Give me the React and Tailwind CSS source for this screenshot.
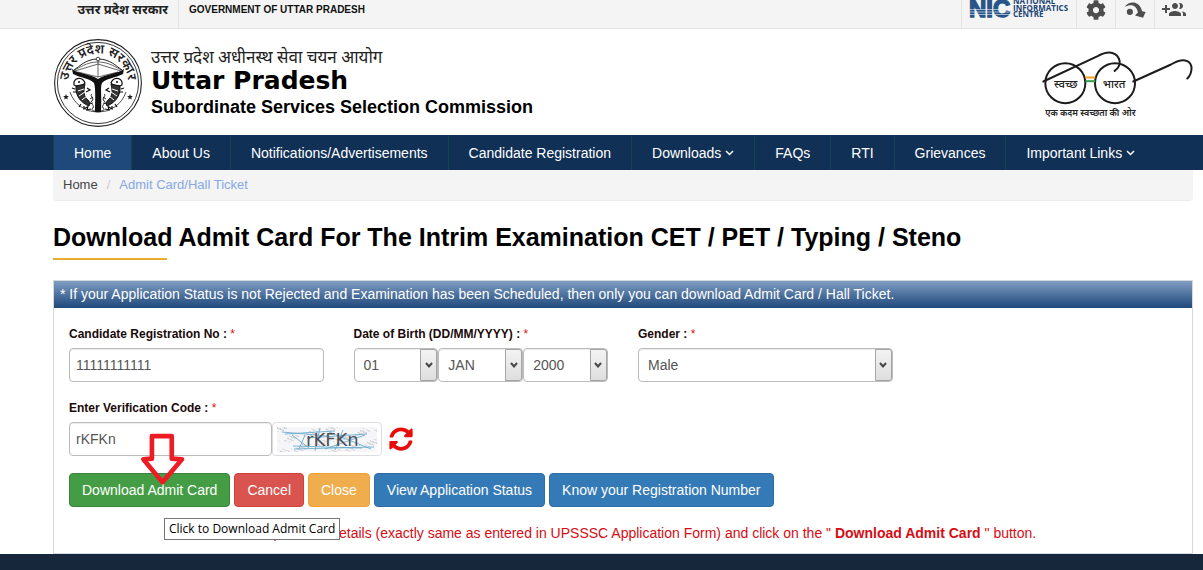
import React from "react";
import { FaSyncAlt, FaCog } from "react-icons/fa";

const hindi = "font-['Noto_Sans','Noto_Sans_Devanagari',sans-serif]";

function Emblem() {
  const fish = (
    <g fill="none" stroke="#111">
      <path d="M-24 -1 C-22 -6 -15 -6 -13 0 C-15 3 -21 4 -24 2 Z" fill="#fff" strokeWidth="1.2" />
      <circle cx="-19" cy="-1" r="1" fill="#111" stroke="none" />
      <path d="M-22 3 C-23 14 -16 20 -9 23 C-8 20 -8 19 -10 17 C-14 14 -15 9 -13 1 Z" fill="#333" strokeWidth="1" />
      <path d="M-20 8 l6 -2 M-19 13 l6 -4 M-16 17 l5 -4" stroke="#fff" strokeWidth="1" />
      <path d="M-26 5 l3 1 M-25 9 l3 0 M-11 5 l3 2 -4 2 M-17 21 l-2 3 M-14 23 l0 3 3 -2 M-10 23 l-1 4 4 -1" strokeWidth="1.2" />
      <path d="M-6 11 C-9 13 -3 15 -6 18 C-10 20 -3 21 -5 25 C-8 27 -4 28 -3 28 M-8 16 l3 -2 M-9 21 l4 -1" strokeWidth="0.9" />
    </g>
  );
  return (
    <svg viewBox="-44 -44 88 88" className="size-[88px] shrink-0" role="img" aria-label="Emblem">
      <g fill="none" stroke="#222">
        <circle r="43.4" strokeWidth="1.1" />
        <circle r="40.6" strokeWidth="0.9" />
        <path d="M-28 9 A29.5 29.5 0 0 0 28 9" strokeWidth="0.8" />
        <path d="M-24 -13 C-18 -17 -12 -24 0 -24 C12 -24 18 -17 24 -13" strokeWidth="1" />
        <path d="M-24 -13 C-18 -15 -12 -21 0 -21 C12 -21 18 -15 24 -13" strokeWidth="0.7" />
        <path d="M0 -26 V-6 M-23 -12 L0 -19 L23 -12 M-20 -11 L0 -6 L20 -11" strokeWidth="0.7" />
      </g>
      <circle cy="-24" r="1.8" fill="#fff" stroke="#222" strokeWidth="0.8" />
      <path d="M-26 -14 C-19 -9 -8 -9 0 -4 C8 -9 19 -9 26 -14 L25 -9 C17 -5 9 -5 4 0 C2 4 4 13 3 29 H-3 C-3 20 -2 6 -4 0 C-9 -5 -17 -5 -25 -9 Z" fill="#111" />
      {fish}
      <g transform="scale(-1 1)">{fish}</g>
      <g fill="#222">
        <path d="M-32 11 l.8 2 2.1 .1 -1.6 1.4 .5 2.1 -1.8 -1.1 -1.8 1.1 .5 -2.1 -1.6 -1.4 2.1 -.1 Z" />
        <path d="M32 11 l.8 2 2.1 .1 -1.6 1.4 .5 2.1 -1.8 -1.1 -1.8 1.1 .5 -2.1 -1.6 -1.4 2.1 -.1 Z" />
      </g>
      <path id="arc" d="M-26.7 14 A30 30 0 1 1 26.7 14" fill="none" />
      <text className={hindi} fontSize="13" fontWeight="600" fill="#222" textAnchor="middle">
        <textPath href="#arc" startOffset="50%">उत्तर प्रदेश सरकार</textPath>
      </text>
    </svg>
  );
}

function Glasses() {
  return (
    <svg viewBox="300 146 456 206" className="h-[69px] w-[152px] shrink-0" role="img" aria-label="स्वच्छ भारत">
      <g fill="none" stroke="#1c1c1c" strokeWidth="6" strokeLinecap="round">
        <circle cx="373" cy="248" r="60" />
        <circle cx="522" cy="248" r="60" />
        <path d="M307 243 L470 167 C505 148 530 155 536 182 C537 195 530 205 521 211" />
        <path d="M577 243 L690 192 C725 172 746 178 751 197 C753 212 747 226 739 234" />
      </g>
      <path d="M433 231 H463" stroke="#f0a323" strokeWidth="6" />
      <path d="M433 242 H463" stroke="#2f9e4a" strokeWidth="6" />
      <g className={hindi} fill="#222" textAnchor="middle">
        <text x="374" y="262" fontSize="34" fontWeight="500">स्वच्छ</text>
        <text x="519" y="262" fontSize="34" fontWeight="500">भारत</text>
        <text x="448" y="345" fontSize="27" fontWeight="600">एक कदम स्वच्छता की ओर</text>
      </g>
    </svg>
  );
}

function NicLogo() {
  return (
    <svg viewBox="0 0 104 24" className="h-6 w-[104px]" role="img" aria-label="National Informatics Centre">
      <g className="font-['Liberation_Sans',sans-serif]" fontWeight="700" fill="#27558a">
        <text x="0" y="19" fontSize="24" stroke="#27558a" strokeWidth="1.4">NIC</text>
      </g>
      <g stroke="#f4f4f4" strokeWidth="0.6">
        <path d="M0 11.5 H43 M0 14 H43 M0 16.5 H43" />
      </g>
      <g className="font-['Open_Sans',sans-serif]" fontWeight="700" fontSize="8" fill="#1f4674">
        <text x="44" y="6">NATIONAL</text>
        <text x="44" y="13">INFORMATICS</text>
        <text x="44" y="19">CENTRE</text>
      </g>
    </svg>
  );
}

function Captcha() {
  const dots = Array.from({ length: 320 }, (_, i) => ({
    x: (i * 37.7 + (i % 7) * 5.3) % 100,
    y: (i * 11.3 + (i % 5) * 3.1) % 25,
    c: ["#c9c4d2", "#d8cfc9", "#b9cbd6"][i % 3],
  }));
  return (
    <svg viewBox="0 0 100 25" className="h-[25px] w-[100px]" role="img" aria-label="Verification code image">
      <rect width="100" height="25" fill="#f6f6f8" />
      {dots.map((d, i) => (
        <rect key={i} x={d.x} y={d.y} width="1" height="1" fill={d.c} />
      ))}
      <path d="M5 5 L50 9 M8 7 L58 4 M15 8 L32 21 M28 8 L22 22 M16 19 L85 21 M17 22 L97 20 M43 1 L38 24 M30 11 L90 7 M48 22 L88 8 M52 5 L94 22 M66 3 L58 23" fill="none" stroke="#6aaed0" strokeWidth="0.9" />
      <text x="29" y="19" fontSize="18" fill="#4c4f55" className="font-['DejaVu_Sans',sans-serif]">rKFKn</text>
    </svg>
  );
}

function Chevron() {
  return (
    <svg viewBox="0 0 9 6" className="h-[6px] w-[9px]" aria-hidden="true">
      <path d="M1 1 L4.5 4.5 L8 1" fill="none" stroke="currentColor" strokeWidth="1.5" />
    </svg>
  );
}

function SelectBox({ id, label, value, className }) {
  return (
    <div className={"relative " + className}>
      <select
        id={id}
        aria-label={label}
        defaultValue={value}
        className="h-[34px] w-full appearance-none rounded-[4px] border border-[#bbb] bg-white px-[9px] text-sm text-[#555] shadow-[inset_0_1px_1px_rgba(0,0,0,0.08)]"
      >
        <option>{value}</option>
      </select>
      <span className="pointer-events-none absolute inset-y-px right-px flex w-[17px] items-center justify-center rounded-r-[3px] border border-[#a5a5a5] bg-linear-to-b from-[#f3f3f3] to-[#dedede] text-[#444]">
        <svg viewBox="0 0 8 7" className="h-[7px] w-2" aria-hidden="true">
          <path d="M1 1 L4 4.5 L7 1" fill="none" stroke="currentColor" strokeWidth="2" />
        </svg>
      </span>
    </div>
  );
}

function Label({ htmlFor, children }) {
  return (
    <label htmlFor={htmlFor} className="mb-1 block text-xs leading-5 font-bold text-[#1a0a0a]">
      {children} : <span className="font-normal text-[#e01010]">*</span>
    </label>
  );
}

const nav = [
  { t: "Home", active: true },
  { t: "About Us" },
  { t: "Notifications/Advertisements" },
  { t: "Candidate Registration" },
  { t: "Downloads", menu: true },
  { t: "FAQs" },
  { t: "RTI" },
  { t: "Grievances" },
  { t: "Important Links", menu: true },
];

const inputClass =
  "h-[34px] w-full rounded-[4px] border border-[#bbb] bg-white px-[6px] text-sm text-[#555] shadow-[inset_0_1px_1px_rgba(0,0,0,0.08)]";
const btn = "h-[34px] rounded-[4px] border px-3 text-sm text-white";
const tool = "flex w-[39px] items-center justify-center border-l border-[#e4e4e4] text-[#4d4d4d]";

export default function App() {
  return (
    <div className="flex min-h-screen flex-col overflow-hidden bg-white font-['Liberation_Sans',Arial,sans-serif] text-black">
      <div className="-mt-[9px] flex h-[38px] shrink-0 items-stretch border-b border-[#e6e6e6] bg-[#f4f4f4] pr-[10px] pl-[53px]">
        <div className={"flex w-[126px] items-center justify-end border-r border-[#e4e4e4] pr-[10px] text-[13px] font-bold text-[#222] " + hindi}>
          उत्तर प्रदेश सरकार
        </div>
        <div className="flex items-center pl-[10px] text-[10px] font-bold text-[#111]">GOVERNMENT OF UTTAR PRADESH</div>
        <div className="ml-auto flex w-[115px] items-center border-l border-[#e4e4e4] pl-[7px]">
          <NicLogo />
        </div>
        <button aria-label="Settings" className={tool}><FaCog size={20} /></button>
        <button aria-label="Skip to content" className={tool}>
          <svg viewBox="132 2 68 56" className="h-[18px] w-[22px]" aria-hidden="true">
            <circle cx="150" cy="36" r="9.5" fill="currentColor" />
            <path d="M134 20 C148 1 180 0 188 34 L199 36 L191 54 L166 47 L175 38 C172 16 155 9 134 20 Z" fill="currentColor" />
          </svg>
        </button>
        <button aria-label="Add user" className={tool}>
          <svg viewBox="0 0 24 24" className="size-6" fill="currentColor" aria-hidden="true">
            <path d="M8 10H5V7H3v3H0v2h3v3h2v-3h3v-2zm10 1c1.66 0 2.99-1.34 2.99-3S19.66 5 18 5c-.32 0-.63.05-.91.14.57.81.9 1.79.9 2.86s-.34 2.04-.9 2.86c.28.09.59.14.91.14zm-5 0c1.66 0 2.99-1.34 2.99-3S14.66 5 13 5c-1.66 0-3 1.34-3 3s1.34 3 3 3zm6.62 2.16c.83.73 1.38 1.66 1.38 2.84v2h3v-2c0-1.54-2.37-2.49-4.38-2.84zM13 13c-2 0-6 1-6 3v2h12v-2c0-2-4-3-6-3z" />
          </svg>
        </button>
      </div>

      <header className="flex h-[106px] shrink-0 items-center gap-[9px] pt-[2px] pr-[10px] pl-[54px]">
        <Emblem />
        <div>
          <p className={"text-[17px] leading-5 text-[#222] " + hindi}>उत्तर प्रदेश अधीनस्थ सेवा चयन आयोग</p>
          <p className="font-['DejaVu_Sans',sans-serif] text-[25px] leading-7 font-bold">Uttar Pradesh</p>
          <p className="text-lg leading-6 font-bold">Subordinate Services Selection Commission</p>
        </div>
        <div className="ml-auto"><Glasses /></div>
      </header>

      <nav className="h-[35px] shrink-0 bg-[#103056] pl-[53px]">
        <ul className="flex h-full">
          {nav.map((n) => (
            <li key={n.t} className={"flex border-l border-[#114350] " + (n.active ? "bg-[#1f497a]" : "")}>
              <a href="#" className="flex items-center gap-1 px-5 text-sm whitespace-nowrap text-white">
                {n.t}
                {n.menu && <Chevron />}
              </a>
            </li>
          ))}
        </ul>
      </nav>

      <main className="pr-[10px] pl-[53px]">
        <ol className="flex h-[31px] items-center rounded-b-[4px] border-b border-[#ececec] bg-[#f4f4f4] px-[10px] text-[13px]">
          <li><a href="#" className="text-[#444]">Home</a></li>
          <li className="px-[9px] text-[#ccc]">/</li>
          <li className="text-[#86a8e0]">Admit Card/Hall Ticket</li>
        </ol>

        <h1 className="mt-5 text-[25px] leading-8 font-bold">
          Download Admit Card For The Intrim Examination CET / PET / Typing / Steno
        </h1>
        <div className="mt-[5px] h-[2px] w-[114px] bg-[#e9ae2f]" />

        <section className="mt-5 h-[274px] border border-[#d5d9dd]">
          <p className="h-[27px] bg-linear-to-b from-[#7f9dc2] to-[#1f497b] px-[6px] text-sm leading-[27px] text-white">
            * If your Application Status is not Rejected and Examination has been Scheduled, then only you can download Admit Card / Hall Ticket.
          </p>
          <form className="pt-4" onSubmit={(e) => e.preventDefault()}>
            <div className="grid grid-cols-4">
              <div className="px-[15px]">
                <Label htmlFor="reg">Candidate Registration No</Label>
                <input id="reg" defaultValue="11111111111" className={inputClass} />
              </div>
              <div className="px-[15px]">
                <Label htmlFor="day">Date of Birth (DD/MM/YYYY)</Label>
                <div className="flex">
                  <SelectBox id="day" label="Day" value="01" className="flex-1" />
                  <SelectBox id="month" label="Month" value="JAN" className="flex-1" />
                  <SelectBox id="year" label="Year" value="2000" className="flex-1" />
                </div>
              </div>
              <div className="px-[15px]">
                <Label htmlFor="gender">Gender</Label>
                <SelectBox id="gender" label="Gender" value="Male" className="w-full" />
              </div>
            </div>

            <div className="mt-4 px-[15px]">
              <Label htmlFor="code">Enter Verification Code</Label>
              <div className="flex items-center">
                <div className="w-[203px]">
                  <input id="code" defaultValue="rKFKn" className={inputClass} />
                </div>
                <div className="flex h-[34px] w-[110px] items-center justify-center rounded-[4px] border border-[#ddd] bg-white">
                  <Captcha />
                </div>
                <button type="button" aria-label="Refresh code" className="ml-[7px] text-[#e80c0c]">
                  <FaSyncAlt size={24} />
                </button>
              </div>
            </div>

            <div className="mt-[17px] flex gap-1 px-[15px]">
              <div className="relative">
                <button className={btn + " border-[#398439] bg-[#449d44]"}>Download Admit Card</button>
                <svg viewBox="270 110 136 162" className="pointer-events-none absolute -top-[41px] left-[71px] z-10 h-[54px] w-[45px]" aria-hidden="true">
                  <path d="M306 122 H366 V190 L397 192 L338 261 L280 192 L306 190 Z" fill="none" stroke="#ed1c24" strokeWidth="14" strokeLinejoin="round" />
                </svg>
                <div role="tooltip" className="absolute top-[45px] left-[95px] z-10 border border-[#767676] bg-white px-1 font-['Open_Sans',sans-serif] text-xs leading-5 whitespace-nowrap text-black">
                  Click to Download Admit Card
                </div>
              </div>
              <button type="button" className={btn + " border-[#d43f3a] bg-[#d9534f]"}>Cancel</button>
              <button type="button" className={btn + " border-[#eea236] bg-[#f0ad4e]"}>Close</button>
              <button type="button" className={btn + " border-[#2e6da4] bg-[#337ab7]"}>View Application Status</button>
              <button type="button" className={btn + " border-[#2e6da4] bg-[#337ab7]"}>Know your Registration Number</button>
            </div>

            <p className="mt-4 text-center text-sm leading-5 text-[#d60c14]">
              Please fill personal details (exactly same as entered in UPSSSC Application Form) and click on the " <b>Download Admit Card</b> " button.
            </p>
          </form>
        </section>
      </main>

      <footer className="min-h-4 flex-1 bg-[#16263b]" />
    </div>
  );
}
